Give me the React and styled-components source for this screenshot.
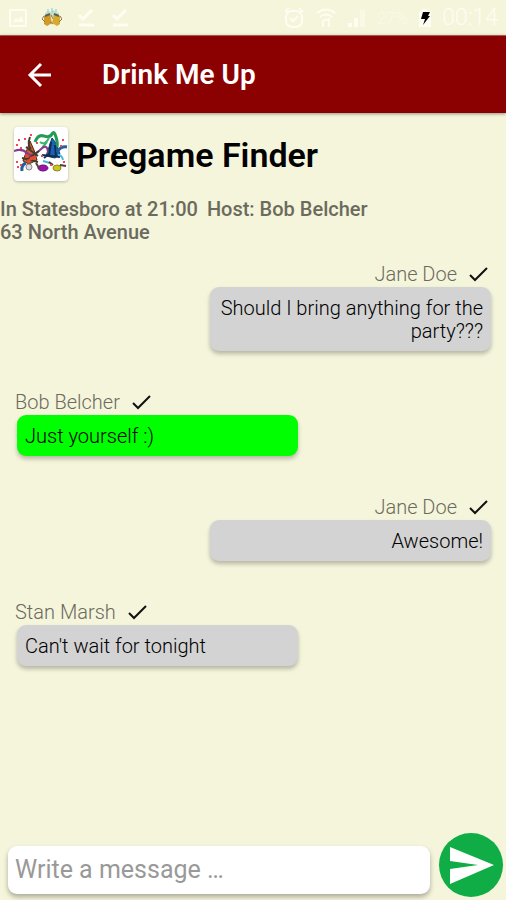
import React from "react"
import styled, { createGlobalStyle } from "styled-components"


const MESSAGES = [
  { id: 1, name: 'Jane Doe', text: 'Should I bring anything for the party???', mine: true },
  { id: 2, name: 'Bob Belcher', text: 'Just yourself :)', host: true },
  { id: 3, name: 'Jane Doe', text: 'Awesome!', mine: true },
  { id: 4, name: 'Stan Marsh', text: "Can't wait for tonight" },
]

const GlobalStyle = createGlobalStyle`
  * {
    box-sizing: border-box;
  }

  body {
    margin: 0;
    background: beige;
    font-family: Roboto, "Liberation Sans", sans-serif;
    color: black;
  }
`

const Screen = styled.div`
  display: flex;
  flex-direction: column;
  min-height: 100vh;
`

const StatusBar = styled.div`
  display: flex;
  align-items: center;
  justify-content: space-between;
  height: 35px;
  padding: 0 8px;
  color: #fdfdf2;
`

const StatusGroup = styled.div`
  display: flex;
  align-items: center;
  gap: ${props => props.$gap};
`

const StatusText = styled.span`
  font-size: ${props => props.$size};
  font-weight: 300;
  line-height: 24px;
  opacity: ${props => props.$faint ? 0.6 : 1};
`

const AppBar = styled.header`
  display: flex;
  align-items: center;
  gap: 48px;
  height: 78px;
  padding: 0 26px;
  background: darkred;
  color: white;
  border-top: 1px solid #a5584c;
  box-shadow: 0 1px 3px rgba(0, 0, 0, 0.4);
`

const BackButton = styled.button`
  display: flex;
  padding: 0;
  border: 0 none;
  background: none;
  color: white;
  cursor: pointer;
`

const AppTitle = styled.span`
  font-size: 28px;
  font-weight: 600;
`

const PartyHeader = styled.div`
  display: flex;
  align-items: center;
  gap: 8px;
  padding: 14px 14px 0;
`

const PartyLogo = styled.div`
  display: flex;
  width: 54px;
  height: 54px;
  background: white;
  border-radius: 4px;
  box-shadow: 0 1px 3px rgba(0, 0, 0, 0.25);
`

const PartyName = styled.h1`
  margin: 2px 0 0;
  font-size: 34px;
  font-weight: 600;
  line-height: 48px;
`

const PartyInfo = styled.p`
  margin: 17px 0 0;
  font-size: 20px;
  font-weight: 500;
  line-height: 23px;
  color: #6b6b5d;
`

const InfoItem = styled.span`
  margin-right: 9px;
`

const MessageList = styled.ul`
  display: flex;
  flex-direction: column;
  flex: 1;
  gap: 37px;
  margin: 0;
  padding: 16px 15px;
  list-style: none;
`

const MessageItem = styled.li`
  display: flex;
  flex-direction: column;
  align-items: ${props => props.$mine ? 'flex-end' : 'flex-start'};
`

const Sender = styled.div`
  display: flex;
  align-items: center;
  gap: 12px;
  height: 27px;
  font-size: 20px;
  font-weight: 350;
  color: #6b6b5d;
`

const Bubble = styled.div`
  width: 59%;
  margin-left: 2px;
  padding: 10px 8px 8px;
  border-radius: 9px;
  background: ${props => props.$host ? 'lime' : 'lightgray'};
  box-shadow: 0 3px 4px rgba(0, 0, 0, 0.25);
  font-size: 20px;
  font-weight: 350;
  line-height: 23px;
  text-align: ${props => props.$mine ? 'right' : 'left'};
`

const Composer = styled.form`
  display: flex;
  align-items: center;
  gap: 9px;
  padding: 0 2px 2px 8px;
`

const MessageInput = styled.input`
  flex: 1;
  min-width: 0;
  height: 48px;
  margin-top: 8px;
  padding: 0 7px;
  border: 0 none;
  border-radius: 9px;
  background: white;
  box-shadow: 0 3px 5px rgba(0, 0, 0, 0.3);
  font-family: inherit;
  font-size: 25px;

  &::placeholder {
    color: #999;
    opacity: 1;
  }
`

const SendButton = styled.button`
  display: flex;
  padding: 0;
  border: 0 none;
  border-radius: 50%;
  background: none;
  cursor: pointer;
`


const PictureIcon = () => (
  <svg width="20" height="20" viewBox="0 0 20 20" fill="none" stroke="currentColor" strokeWidth="2">
    <rect x="2" y="2" width="16" height="16" rx="1" />
    <path d="M5 14l3-4 2 2 3-4 3 6z" fill="currentColor" stroke="none" />
  </svg>
)

const BeersIcon = () => (
  <svg width="20" height="20" viewBox="0 0 20 20">
    <path d="M3 5l3-2 3 1 2-2 3 2 3 1-1 4H4z" fill="#b9dfd2" />
    <path d="M6 1v3M10 0v4M14 1v3" stroke="#7fcfcb" strokeWidth="1" />
    <path d="M2 8l6-2 2 9-5 3-3-2z" fill="#d09a28" />
    <path d="M12 6l6 2v8l-3 2-5-3z" fill="#d8a92f" />
    <path d="M2 8l-2 3 3 3M18 8l2 3-3 3M9 7l2 4M8 14l3 2" fill="none" stroke="#887a50" />
    <path d="M3 8l5-2M12 6l5 2" stroke="#665f4c" strokeWidth="2" />
  </svg>
)

const DownloadedIcon = () => (
  <svg width="20" height="20" viewBox="0 0 20 20" fill="none" stroke="currentColor" strokeWidth="3">
    <path d="M3 7l4 4 9-9M3 17h15" />
  </svg>
)

const AlarmIcon = () => (
  <svg width="22" height="22" viewBox="0 0 22 22" fill="none" stroke="currentColor" strokeWidth="2">
    <rect x="3" y="4" width="16" height="16" rx="6" />
    <path d="M2 5l4-4M20 5l-4-4M7 11l3 3 5-5" />
  </svg>
)

const WifiIcon = () => (
  <svg width="22" height="22" viewBox="0 0 22 22" fill="none" stroke="currentColor" strokeWidth="2">
    <path d="M2 6q9-7 18 0M5 10q6-5 12 0M8 14q3-3 6 0M8 14v6M14 11v9" />
  </svg>
)

const SignalIcon = () => (
  <svg width="20" height="20" viewBox="0 0 20 20" fill="currentColor">
    <path d="M1 15h4v4H1zM7 10h4v9H7z" />
    <path d="M13 2h5v17h-5z" opacity="0.5" />
  </svg>
)

const BatteryIcon = () => (
  <svg width="14" height="20" viewBox="0 0 14 20">
    <path d="M4 1h5v2h4v16H1V3h3z" fill="#fdfdf2" />
    <path d="M5 4h7l-2 4h2L5 17l2-6H3z" fill="black" />
  </svg>
)

const BackIcon = () => (
  <svg width="28" height="28" viewBox="0 0 28 28" fill="none" stroke="currentColor" strokeWidth="3">
    <path d="M15 3L4 14l11 11M4 14h21" />
  </svg>
)

const CheckIcon = () => (
  <svg width="22" height="16" viewBox="0 0 22 16" fill="none" stroke="#111" strokeWidth="2">
    <path d="M1 9l5 5L18 2" />
  </svg>
)

const SendIcon = () => (
  <svg width="65" height="65" viewBox="0 0 65 65">
    <circle cx="32" cy="32" r="32" fill="#10ac46" />
    <path d="M11 14l44 18-44 19V36l28-4-28-4z" fill="white" />
  </svg>
)

const PartyIcon = () => (
  <svg width="54" height="54" viewBox="0 0 54 54" fill="none">
    <path d="M38 11l4 5 4 11-5 4-9-2z" fill="#1764b5" stroke="#123d72" />
    <path d="M16 14l4 9 3 10-8 4-6-3z" fill="#d65a32" stroke="#552718" />
    <path d="M21 15q3-8 9-6t8-2 4 3 1 10" stroke="#249c55" strokeWidth="3" />
    <path d="M35 11q-4 8-9 4M33 15l-5 6" stroke="#3db66f" strokeWidth="2" />
    <path d="M0 24q8-3 13 2t13-3 8 4" stroke="#873c8e" strokeWidth="2" />
    <path d="M16 10q-3 8 1 12M12 20l12 9M8 31l16 4M12 33l13-9" stroke="#433c2d" strokeWidth="2" />
    <path d="M37 15l-2 14M41 18l1 12M28 28l18 2M30 31l6-5" stroke="#102d55" strokeWidth="2" />
    <path d="M43 25q4-6 10-5M8 44q-1-6 4-8" stroke="#245e9c" strokeWidth="3" />
    <path d="M44 28q4 0 5 5M29 34l7 2" stroke="#48b6de" strokeWidth="2" />
    <path d="M11 28l4 2M16 31l6-1M13 34l7-3" stroke="#e84639" strokeWidth="2" />
    <circle cx="15" cy="40" r="3" fill="#ddd" stroke="#888" />
    <ellipse cx="29" cy="41" rx="5" ry="3" fill="#a20cb1" stroke="#562164" />
    <ellipse cx="43" cy="41" rx="4" ry="3" fill="#cec51a" stroke="#8a882a" />
    <path d="M46 38l6 1M22 36l3 5M35 35l4 3" stroke="#554034" strokeWidth="2" />
    <path
      d="M4 13h2M10 12h2M2 18h2M6 21h2M16 8h2M22 16h2M46 19h2M48 13h2M2 35h2M3 40h2M6 38h2M36 38h2M49 35h2M27 29h2"
      stroke="#f04858"
      strokeWidth="2"
    />
  </svg>
)

const Message = ({ name, text, mine, host }) => (
  <MessageItem $mine={mine}>
    <Sender>
      {name}
      <CheckIcon />
    </Sender>
    <Bubble $mine={mine} $host={host}>{text}</Bubble>
  </MessageItem>
)

const MessageForm = () => {
  const messageInput = React.useRef()

  const onSubmit = (e) => {
    e.preventDefault()
    messageInput.current.value = ''
  }

  return (
    <Composer onSubmit={onSubmit}>
      <MessageInput type={'text'}
                    aria-label={'Message'}
                    placeholder={'Write a message …'}
                    ref={messageInput}
      />
      <SendButton type={'submit'} aria-label={'Send'}>
        <SendIcon />
      </SendButton>
    </Composer>
  )
}

const App = () => (
  <>
    <GlobalStyle />
    <Screen>
      <StatusBar>
        <StatusGroup $gap="14px">
          <PictureIcon />
          <BeersIcon />
          <DownloadedIcon />
          <DownloadedIcon />
        </StatusGroup>
        <StatusGroup $gap="10px">
          <AlarmIcon />
          <WifiIcon />
          <SignalIcon />
          <StatusText $size="17px" $faint>27%</StatusText>
          <BatteryIcon />
          <StatusText $size="23px">00:14</StatusText>
        </StatusGroup>
      </StatusBar>
      <AppBar>
        <BackButton aria-label={'Back'}>
          <BackIcon />
        </BackButton>
        <AppTitle>Drink Me Up</AppTitle>
      </AppBar>
      <PartyHeader>
        <PartyLogo>
          <PartyIcon />
        </PartyLogo>
        <PartyName>Pregame Finder</PartyName>
      </PartyHeader>
      <PartyInfo>
        <InfoItem>In Statesboro at 21:00</InfoItem>
        <InfoItem>Host: Bob Belcher</InfoItem>
        <br />
        63 North Avenue
      </PartyInfo>
      <MessageList>
        { MESSAGES.map((message) => (
          <Message key={message.id} {...message} />
        )) }
      </MessageList>
      <MessageForm />
    </Screen>
  </>
)

export default App
